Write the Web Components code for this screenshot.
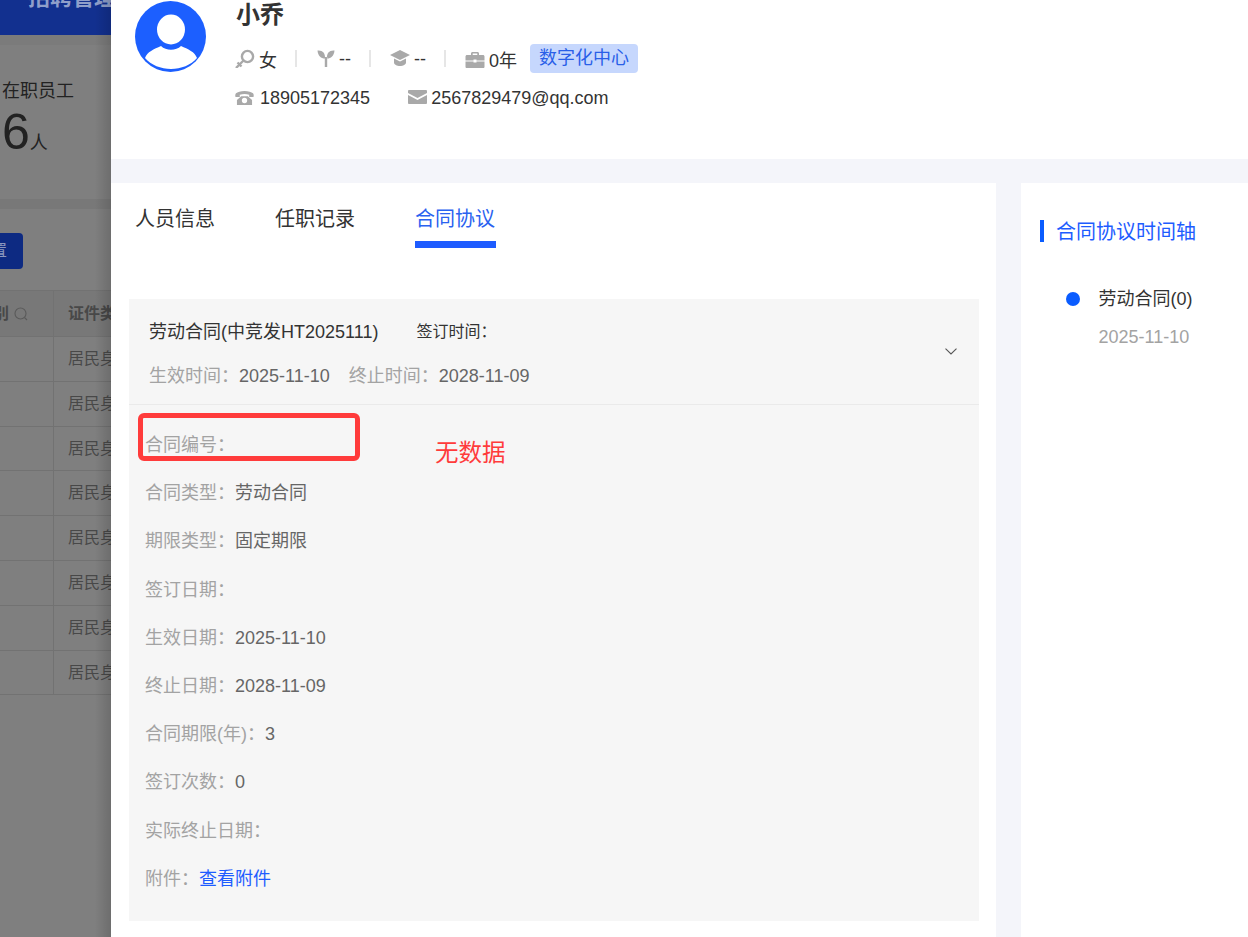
<!doctype html>
<html lang="zh">
<head>
<meta charset="utf-8">
<title>合同协议</title>
<style>
  html, body { margin: 0; height: 937px; overflow: hidden; }
  body {
    display: flex;
    font-family: "Liberation Sans", "Noto Sans CJK SC", sans-serif;
    color: #333;
  }
</style>
</head>
<body>
  <hr-backdrop></hr-backdrop>
  <hr-drawer>
    <hr-profile slot="head"></hr-profile>
    <hr-tabs></hr-tabs>
    <hr-contract></hr-contract>
    <hr-timeline slot="side"></hr-timeline>
  </hr-drawer>

<script>
const html = String.raw;

function define(name, markup) {
  customElements.define(name, class extends HTMLElement {
    constructor() {
      super();
      this.attachShadow({ mode: "open" });
      this.shadowRoot.innerHTML = markup;
    }
  });
}

// The dimmed page that shows to the left of the drawer
const tableRows = Array.from({ length: 8 }, () => html`<div class="row"><span></span><span>居民身</span></div>`).join("");

define("hr-backdrop", html`
  <style>
    :host {
      display: block;
      position: relative;
      width: 111px;
      flex: none;
      overflow: hidden;
      background: #7f7f7f;
      white-space: nowrap;
    }
    :host::after {
      content: "";
      position: absolute;
      top: 0;
      bottom: 0;
      right: 0;
      width: 16px;
      background: linear-gradient(to right, rgba(0,0,0,0), rgba(0,0,0,.14));
    }
    .bar {
      height: 35px;
      overflow: hidden;
      background: #12308f;
      padding-left: 28px;
      color: #8f9fca;
      font-size: 22px;
      font-weight: bold;
      line-height: 22px;
    }
    .bar span { display: block; margin-top: -13px; }
    .stat {
      height: 164px;
      box-sizing: border-box;
      padding: 44px 0 0 2px;
      color: #222;
      background: linear-gradient(#7b7b7b 10px, transparent 10px);
    }
    .stat .label { font-size: 18px; line-height: 24px; }
    .stat .value { display: flex; align-items: baseline; margin-top: 2px; font-size: 18px; line-height: 54px; }
    .stat b { font-weight: normal; font-size: 50px; }
    .gap { height: 10px; background: #787878; }
    .toolbar { height: 81px; box-sizing: border-box; padding-top: 24px; }
    .reset {
      display: flex;
      justify-content: flex-end;
      width: 23px;
      height: 36px;
      box-sizing: border-box;
      padding-right: 16px;
      background: #0d2a82;
      border-radius: 0 4px 4px 0;
      color: #8a96bd;
      font-size: 16px;
      line-height: 36px;
      overflow: hidden;
    }
    .row, .head {
      display: grid;
      grid-template-columns: 53px 1fr;
      border-top: 1px solid #727272;
      color: #484848;
      font-size: 16px;
    }
    .head { height: 45px; background: #787878; font-weight: bold; line-height: 45px; }
    .head span:first-child { display: flex; align-items: center; justify-content: flex-end; gap: 5px; padding-right: 25px; overflow: hidden; }
    .head svg { flex: none; }
    .row { height: 43.8px; line-height: 44px; }
    .row:last-child { border-bottom: 1px solid #727272; }
    .row span + span, .head span + span { border-left: 1px solid #727272; padding-left: 14px; }
  </style>
  <div class="bar"><span>招聘管理</span></div>
  <div class="stat">
    <div class="label">在职员工</div>
    <div class="value"><b>6</b>人</div>
  </div>
  <div class="gap"></div>
  <div class="toolbar"><div class="reset">置</div></div>
  <div class="head">
    <span>别<svg width="14" height="14" viewBox="0 0 14 14" fill="none" stroke="#5a5a5a" stroke-width="1.1"><circle cx="6.5" cy="6.5" r="5.5"/><path d="M10.5 10.5L13 13"/></svg></span>
    <span>证件类</span>
  </div>
  ${tableRows}
`);

// Shell of the drawer: the header, the main card and the side card
define("hr-drawer", html`
  <style>
    :host {
      display: grid;
      flex: 1;
      min-width: 0;
      grid-template: "head head" 159px "main side" 1fr / 885px 1fr;
      background: #f4f5fa;
    }
    .head { grid-area: head; background: #fff; }
    .main { grid-area: main; background: #fff; margin-top: 24px; }
    .side { grid-area: side; background: #fff; margin: 24px 0 0 25px; }
  </style>
  <div class="head"><slot name="head"></slot></div>
  <div class="main"><slot></slot></div>
  <div class="side"><slot name="side"></slot></div>
`);

define("hr-profile", html`
  <style>
    :host { display: flex; gap: 29px; padding: 1px 0 0 24px; color: #333; font-size: 18px; white-space: nowrap; }
    svg { display: block; flex: none; }
    .name { margin: 0 0 0 1px; font-size: 24px; font-weight: bold; line-height: 28px; color: #333; }
    .line { display: flex; align-items: center; }
    .meta { height: 30px; margin-top: 14px; }
    .meta .item > span { padding-top: 2px; }
    .item { display: flex; align-items: center; gap: 4px; }
    .item + .sep { margin: 0 19px 0 18px; }
    .sep { width: 2px; height: 17px; background: #e6e6e6; }
    .tag {
      margin-left: 13px;
      padding: 0 9px;
      height: 29px;
      line-height: 28px;
      border-radius: 4px;
      background: #c6d7fd;
      color: #2a5fe8;
    }
    .contact { height: 24px; margin-top: 13px; }
    .contact .item { gap: 6px; }
    .contact .item + .item { margin-left: 38px; gap: 4px; }
    .contact .item + .item svg { margin-top: -2px; }
  </style>
  <svg width="71" height="71" viewBox="0 0 71 71">
    <circle cx="35.5" cy="35.5" r="35.5" fill="#1c5fff"/>
    <ellipse cx="36" cy="28.5" rx="14" ry="15" fill="#fff"/>
    <path d="M10 57C12 51 19 48 26 45C31 50 41 50 46 45C53 48 60 51 62 57C56 64 46 68 36 68C26 68 16 64 10 57Z" fill="#fff"/>
  </svg>
  <div>
    <h1 class="name">小乔</h1>
    <div class="line meta">
      <span class="item">
        <svg width="20" height="20" viewBox="0 0 20 20" fill="none" stroke="#a9a9a9" stroke-width="2.4"><circle cx="12.5" cy="8.500" r="5.600"/><path d="M8.500 12.500L1 20M2.500 14.500L6.500 18.500"/></svg>
        <span>女</span>
      </span>
      <span class="sep"></span>
      <span class="item" style="gap:3px">
        <svg width="20" height="20" viewBox="0 0 20 20" fill="#a9a9a9"><path d="M9 10.500C5 10.500 2 8 1.500 2.500C6.500 2 9.500 5 9 10.500ZM11 10.500C15 10.500 18 8 18.500 2.500C13.500 2 10.500 5 11 10.500ZM8.800 9H11.200V19H8.800Z"/></svg>
        <span>--</span>
      </span>
      <span class="sep"></span>
      <span class="item">
        <svg width="20" height="20" viewBox="0 0 20 20" fill="#a9a9a9"><path d="M10 2L20 7L10 12L0 7ZM4 10.500L10 13.500L16 10.500V14.500C16 16.500 13 18 10 18C7 18 4 16.500 4 14.500Z"/></svg>
        <span>--</span>
      </span>
      <span class="sep"></span>
      <span class="item">
        <svg width="20" height="20" viewBox="0 0 20 20" fill="#a9a9a9"><path d="M6 7V5.500C6 4.700 6.700 4 7.500 4H12.500C13.300 4 14 4.700 14 5.500V7H12.300V5.500H7.700V7ZM2 7H18C18.800 7 19.500 7.700 19.500 8.500V12.500H11.500V11.500H8.500V12.500H0.500V8.500C0.500 7.700 1.200 7 2 7ZM0.500 13.500H8.500V14.500H11.500V13.500H19.500V19C19.500 19.500 19 20 18.500 20H1.500C1 20 0.500 19.500 0.500 19Z"/></svg>
        <span>0年</span>
      </span>
      <span class="tag">数字化中心</span>
    </div>
    <div class="line contact">
      <span class="item">
        <svg width="19" height="17" viewBox="0 0 20 18" fill="#a9a9a9"><path d="M10 1C14 1 17.500 2 19 3.500C19.800 4.300 20 6 19.500 7.500H15V5C13.500 4.500 11.500 4.300 10 4.300C8.500 4.300 6.500 4.500 5 5V7.500H0.500C0 6 0.200 4.300 1 3.500C2.500 2 6 1 10 1ZM6.500 6.500H13.500L18 10.500V16H2V10.500ZM10 8.300A2.800 2.800 0 1 0 10 13.900A2.800 2.800 0 1 0 10 8.300Z"/></svg>
        <span>18905172345</span>
      </span>
      <span class="item">
        <svg width="19" height="16" viewBox="0 0 19 16" fill="#a9a9a9"><path d="M1 1H18C18.500 1 19 1.500 19 2V4L9.500 9L0 4V2C0 1.500 0.500 1 1 1ZM0 6L9.500 11L19 6V14C19 14.500 18.500 15 18 15H1C0.500 15 0 14.500 0 14Z"/></svg>
        <span>2567829479@qq.com</span>
      </span>
    </div>
  </div>
`);

define("hr-tabs", html`
  <style>
    :host { display: flex; gap: 59px; height: 65px; padding-left: 24px; font-size: 20px; color: #333; white-space: nowrap; }
    a { display: block; box-sizing: border-box; width: 81px; height: 65px; padding-top: 22px; line-height: 28px; }
    a.active { color: #2a62f0; border-bottom: 7px solid #1e5cff; }
  </style>
  <a>人员信息</a>
  <a>任职记录</a>
  <a class="active">合同协议</a>
`);

// One "label: value" line of the contract details
class HrField extends HTMLElement {
  constructor() {
    super();
    this.attachShadow({ mode: "open" });
    this.shadowRoot.innerHTML = html`
      <style>
        :host { display: block; height: 48.2px; line-height: 48px; color: #a3a3a3; font-size: 18px; white-space: nowrap; }
        ::slotted(*) { color: #666; }
        ::slotted(a) { color: #1e5cff; }
      </style>
      <span></span><slot></slot>
    `;
    this.shadowRoot.querySelector("span").textContent = this.getAttribute("label") + "\uFF1A";
  }
}
customElements.define("hr-field", HrField);

define("hr-contract", html`
  <style>
    :host {
      display: block;
      position: relative;
      margin: 51px 17px 0 18px;
      height: 622px;
      background: #f6f6f6;
      white-space: nowrap;
    }
    header {
      position: relative;
      height: 106px;
      box-sizing: border-box;
      padding: 19px 0 0 20px;
      border-bottom: 1px solid #eaeaea;
      font-size: 18px;
    }
    .title { display: flex; align-items: center; height: 24px; color: #333; }
    .title small { margin-left: 38px; font-size: 16px; }
    .dates { display: flex; gap: 19px; height: 24px; margin-top: 22px; line-height: 24px; color: #a3a3a3; }
    .dates b { font-weight: normal; color: #666; }
    .chevron { position: absolute; top: 49px; right: 22px; }
    .fields { padding: 16px 0 0 16px; }
    .mark {
      position: absolute;
      left: 9px;
      top: 114px;
      width: 222px;
      height: 48px;
      box-sizing: border-box;
      border: 5px solid #ff3b3b;
      border-radius: 6px;
    }
    .note { position: absolute; left: 306px; top: 138px; color: #ff3b3b; font-size: 23.500px; line-height: 32px; }
  </style>
  <header>
    <div class="title">劳动合同(中竞发HT2025111)<small>签订时间&#xFF1A;</small></div>
    <div class="dates">
      <span>生效时间&#xFF1A;<b>2025-11-10</b></span>
      <span>终止时间&#xFF1A;<b>2028-11-09</b></span>
    </div>
    <svg class="chevron" width="12" height="7" viewBox="0 0 12 7" fill="none" stroke="#555" stroke-width="1.100"><path d="M0.500 0.700L6 6L11.500 0.700"/></svg>
  </header>
  <div class="fields">
    <hr-field label="合同编号"></hr-field>
    <hr-field label="合同类型"><span>劳动合同</span></hr-field>
    <hr-field label="期限类型"><span>固定期限</span></hr-field>
    <hr-field label="签订日期"></hr-field>
    <hr-field label="生效日期"><span>2025-11-10</span></hr-field>
    <hr-field label="终止日期"><span>2028-11-09</span></hr-field>
    <hr-field label="合同期限(年)"><span>3</span></hr-field>
    <hr-field label="签订次数"><span>0</span></hr-field>
    <hr-field label="实际终止日期"></hr-field>
    <hr-field label="附件"><a>查看附件</a></hr-field>
  </div>
  <div class="mark"></div>
  <div class="note">无数据</div>
`);

define("hr-timeline", html`
  <style>
    :host { display: block; padding: 37px 0 0 19px; white-space: nowrap; }
    h2 {
      height: 22px;
      margin: 0;
      padding-left: 12px;
      border-left: 4px solid #0a5cff;
      color: #1e5cff;
      font-size: 20px;
      font-weight: normal;
      line-height: 24px;
    }
    .event { display: grid; grid-template-columns: 14px 1fr; column-gap: 18.5px; margin: 45px 0 0 26px; font-size: 18px; }
    .dot { width: 14px; height: 14px; margin-top: 5px; border-radius: 50%; background: #0a5cff; }
    .name { color: #333; line-height: 24px; }
    .date { grid-column: 2; margin-top: 14px; color: #a3a3a3; line-height: 24px; }
  </style>
  <h2>合同协议时间轴</h2>
  <div class="event">
    <span class="dot"></span>
    <span class="name">劳动合同(0)</span>
    <span class="date">2025-11-10</span>
  </div>
`);
</script>
</body>
</html>
